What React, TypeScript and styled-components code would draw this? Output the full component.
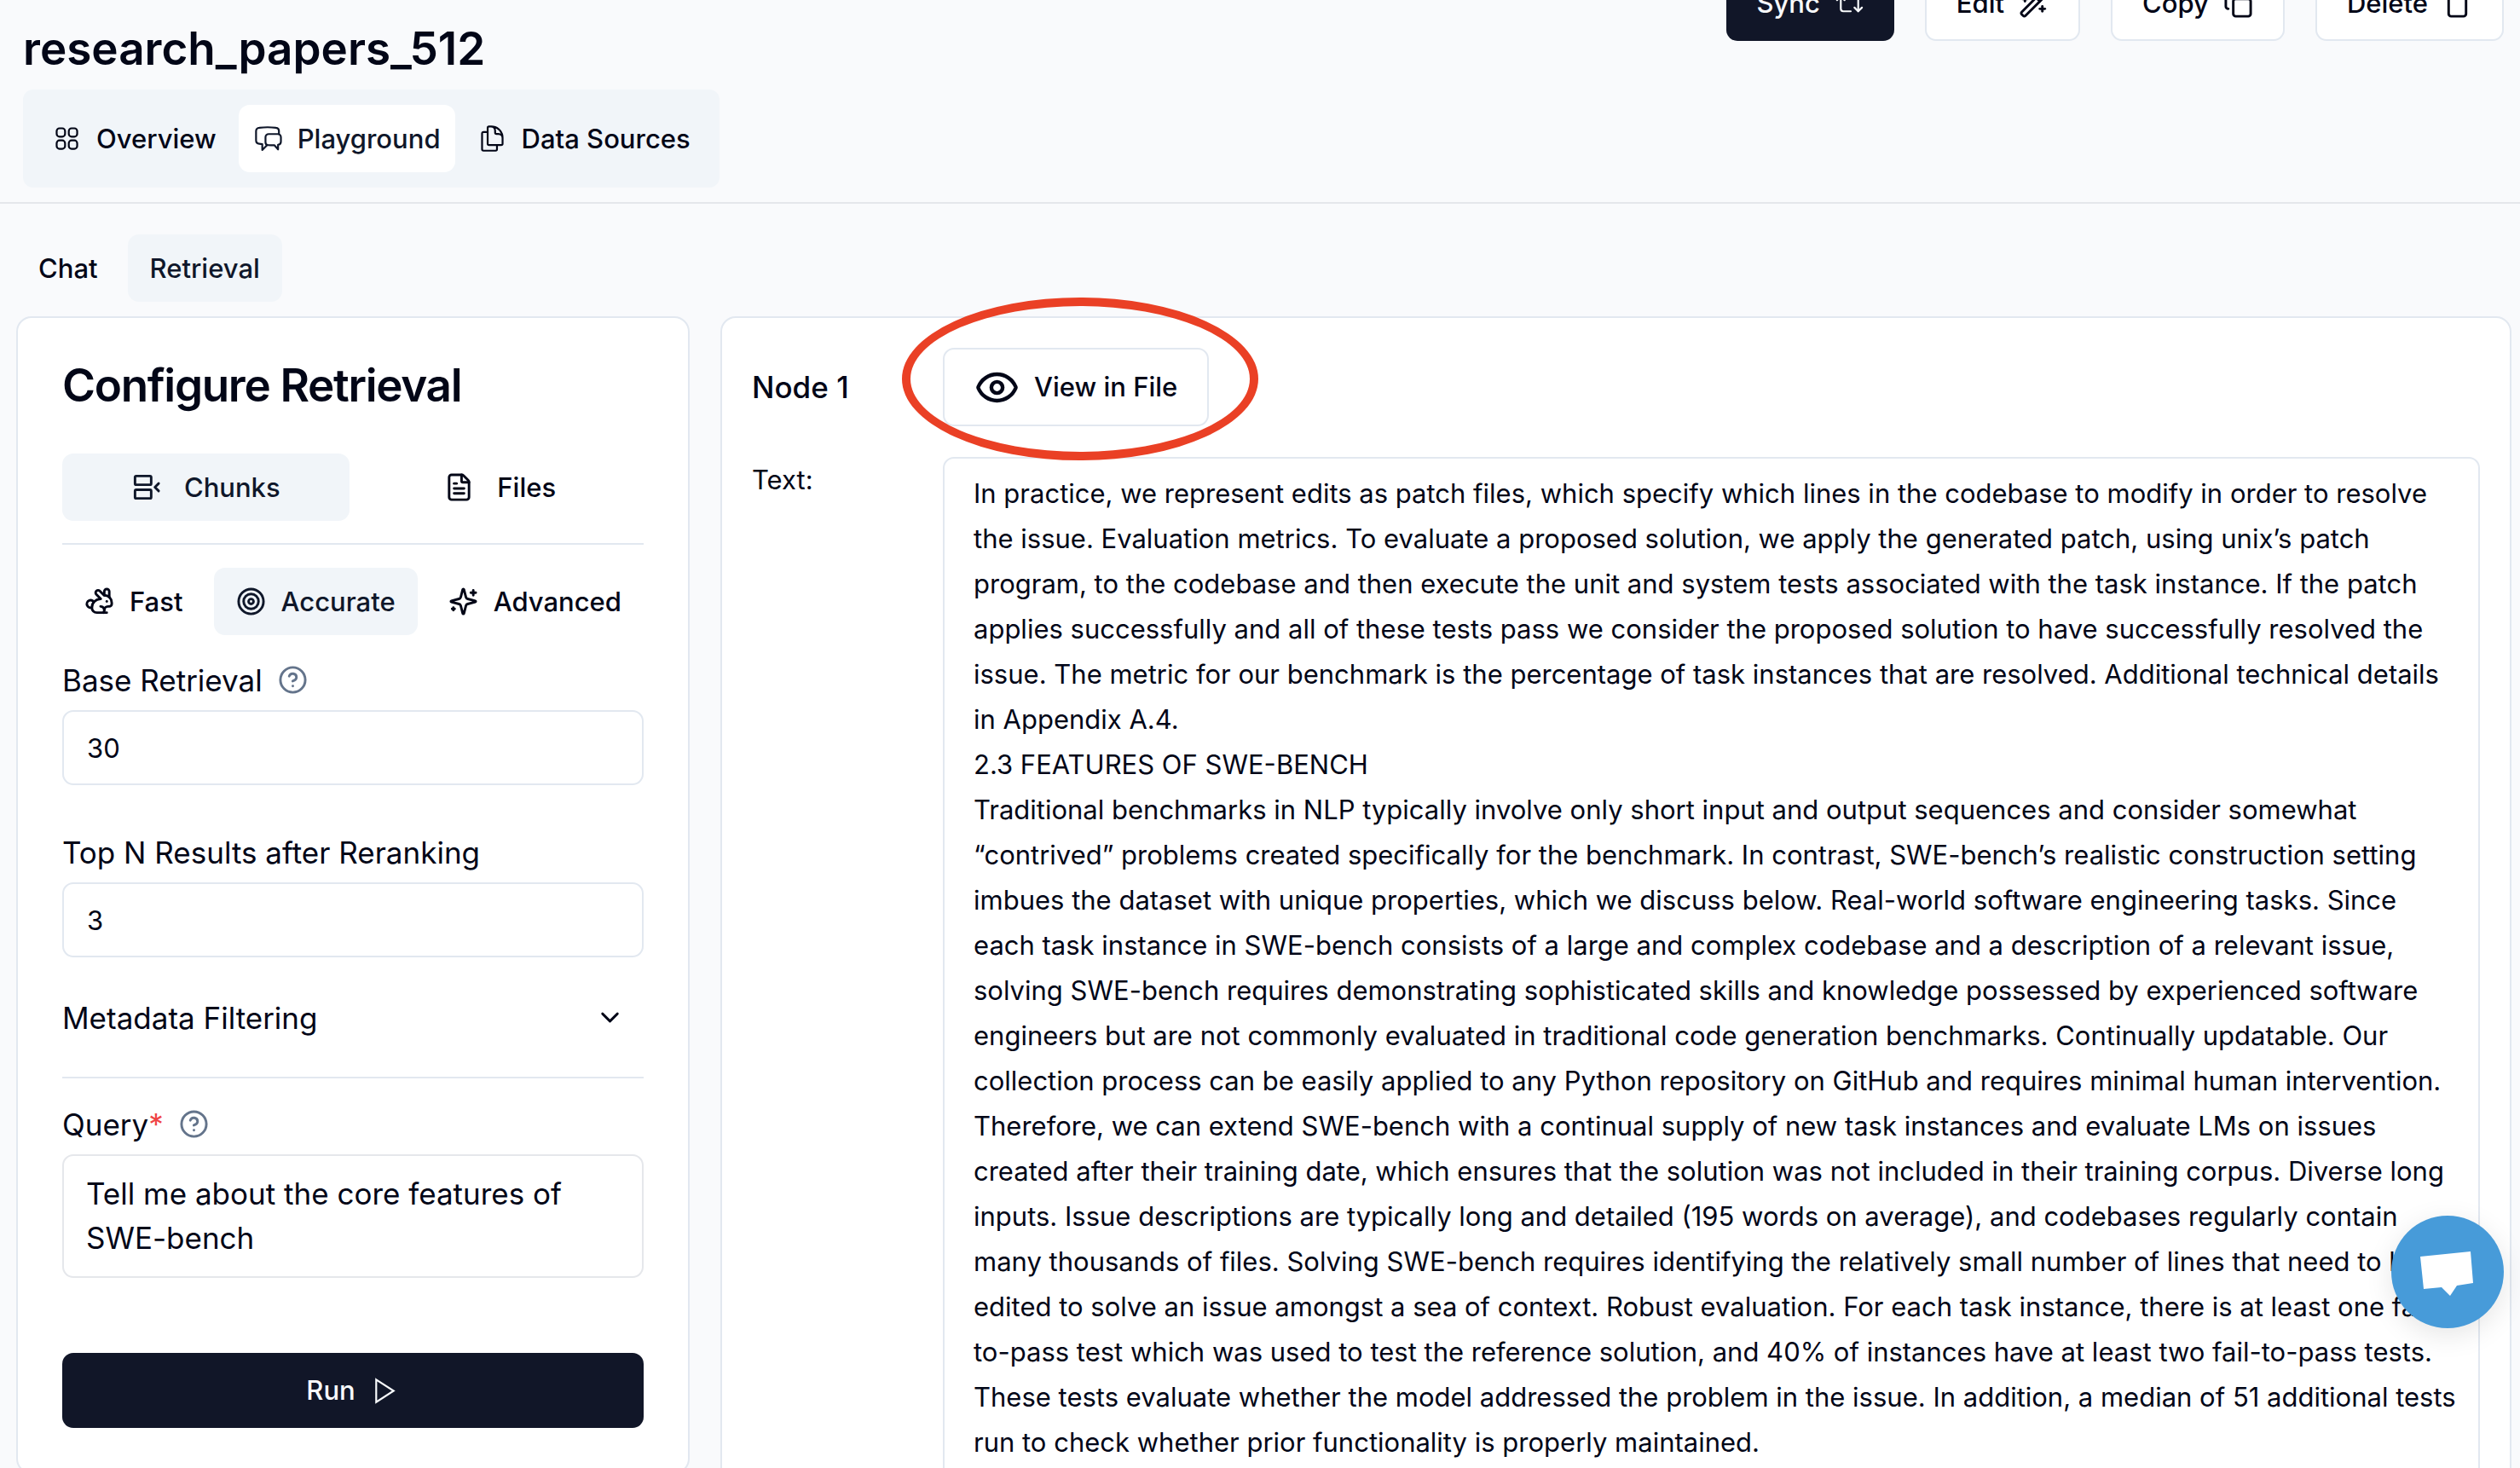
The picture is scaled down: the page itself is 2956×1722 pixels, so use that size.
import React from "react";
import styled, { createGlobalStyle } from "styled-components";
import {
  FileText, Rabbit, Target, CircleHelp, ChevronDown, Eye, Copy, Trash,
  WandSparkles, Repeat2, BetweenHorizontalEnd,
} from "lucide-react";
import { HiOutlineSquares2X2, HiOutlineDocumentDuplicate } from "react-icons/hi2";

const ink = "#020617";
const navy = "#111628";
const line = "#e2e8f0";
const tint = "#f1f5f9";
const page = "#f9fafc";

const GlobalStyle = createGlobalStyle`
  *, *::before, *::after { box-sizing: border-box; }
  body {
    margin: 0;
    background: ${page};
    color: ${ink};
    font-family: Inter, "Liberation Sans", sans-serif;
    font-size: 31px;
    line-height: 44px;
    overflow: hidden;
  }
  button, input, textarea { font: inherit; color: inherit; margin: 0; }
  h1, h2, h3, p { margin: 0; }
  svg { flex: none; }
`;

const Page = styled.div`
  height: 100vh;
  overflow: hidden;
`;

const Header = styled.header`
  display: flex;
  justify-content: space-between;
  align-items: flex-start;
  padding: 0 19px 17px 27px;
  border-bottom: 2px solid #e5e7eb;
`;

const Title = styled.h1`
  margin: 22px 0 13px;
  font-size: 53px;
  line-height: 70px;
  font-weight: 600;
`;

const PrimaryTabs = styled.nav`
  display: flex;
  align-items: center;
  gap: 9px;
  height: 115px;
  padding: 0 17px;
  border-radius: 12px;
  background: ${tint};
`;

const Tab = styled.button<{ $active?: boolean; $grow?: boolean; $gap?: number }>`
  display: flex;
  align-items: center;
  justify-content: center;
  flex: ${(p) => (p.$grow ? "1 1 0" : "none")};
  gap: ${(p) => p.$gap ?? 20}px;
  height: 79px;
  padding: 0 26px;
  border: 0;
  border-radius: 13px;
  background: ${(p) => (p.$active ? tint : "transparent")};
  color: ${(p) => (p.$active ? "#0f172a" : ink)};
  font-weight: 500;
`;

const PrimaryTab = styled(Tab)`
  gap: 17px;
  padding: 0 17px;
  background: ${(p) => (p.$active ? "#fff" : "transparent")};
`;

const Actions = styled.div`
  display: flex;
  gap: 36px;
  margin-top: -40px;
`;

const Button = styled.button<{ $dark?: boolean; $wide?: boolean; $tall?: boolean }>`
  display: flex;
  align-items: center;
  justify-content: center;
  gap: 17px;
  width: ${(p) => (p.$wide ? "100%" : "auto")};
  height: ${(p) => (p.$tall ? 92 : 88)}px;
  padding: 0 35px;
  border: ${(p) => (p.$dark ? "0" : `2px solid ${line}`)};
  border-radius: 13px;
  background: ${(p) => (p.$dark ? navy : "#fff")};
  color: ${(p) => (p.$dark ? "#f8fafc" : ink)};
  font-weight: 500;
`;

const SecondaryTabs = styled.nav`
  display: flex;
  gap: 9px;
  padding: 36px 19px 17px;
`;

const Columns = styled.main`
  display: grid;
  grid-template-columns: 790px minmax(0, 1fr);
  gap: 36px;
  align-items: start;
  padding: 0 10px 0 19px;
`;

const Panel = styled.section`
  border: 2px solid ${line};
  border-radius: 18px;
  background: #fff;
`;

const ConfigPanel = styled(Panel)`
  display: flex;
  flex-direction: column;
  padding: 44px 52px 52px;
`;

const PanelTitle = styled.h2`
  margin-bottom: 45px;
  font-size: 53px;
  line-height: 70px;
  font-weight: 600;
  letter-spacing: -0.025em;
`;

const TabRow = styled.div<{ $split?: boolean }>`
  display: flex;
  justify-content: space-between;
  gap: ${(p) => (p.$split ? 9 : 0)}px;
`;

const Divider = styled.hr`
  width: 100%;
  height: 2px;
  margin: 26px 0 27px;
  border: 0;
  background: ${line};
`;

const Field = styled.div`
  display: flex;
  flex-direction: column;
  gap: 9px;
`;

const Fields = styled.div`
  display: flex;
  flex-direction: column;
  gap: 52px;
  margin-top: 26px;
`;

const LabelRow = styled.div`
  display: flex;
  align-items: center;
  gap: 18px;
  height: 53px;
  font-size: 35px;
`;

const Required = styled.span`
  color: #ef4444;
`;

const HelpButton = styled.button`
  display: flex;
  padding: 0;
  border: 0;
  background: none;
  color: #64748b;
`;

const TextInput = styled.input`
  width: 100%;
  height: 88px;
  padding: 0 27px;
  border: 2px solid ${line};
  border-radius: 13px;
  background: #fff;
`;

const QueryInput = styled.textarea`
  display: block;
  width: 100%;
  height: 145px;
  padding: 18px 26px;
  border: 2px solid #e5e7eb;
  border-radius: 13px;
  background: #fff;
  resize: none;
  overflow: hidden;
  font-size: 35px;
  line-height: 52px;
`;

const Disclosure = styled.button`
  display: flex;
  align-items: center;
  justify-content: space-between;
  height: 53px;
  margin: 44px 0 17px;
  padding: 0 22px 0 0;
  border: 0;
  background: none;
  font-size: 35px;
`;

const RunRow = styled.div`
  margin-top: 88px;
`;

const ResultPanel = styled(Panel)`
  display: grid;
  grid-template-columns: 188px minmax(0, 1fr);
  column-gap: 36px;
  row-gap: 36px;
  padding: 35px;
`;

const NodeTitle = styled.h3`
  align-self: center;
  font-size: 35px;
  font-weight: 500;
`;

const Marked = styled.div`
  position: relative;
  justify-self: start;
`;

const Ring = styled.div`
  position: absolute;
  inset: -59px -58px -40px -48px;
  border: 10px solid #ea4025;
  border-radius: 50%;
  pointer-events: none;
`;

const FieldName = styled.span`
  line-height: 53px;
`;

const Passage = styled.div`
  min-height: 1240px;
  padding: 14px 34px;
  border: 2px solid ${line};
  border-radius: 13px;
  line-height: 53px;
  white-space: pre;
`;

const ChatBubble = styled.button`
  position: fixed;
  right: 19px;
  bottom: 164px;
  width: 132px;
  height: 132px;
  padding: 0;
  border: 0;
  border-radius: 50%;
  background: #479bd9;
  box-shadow: 0 8px 32px rgba(0, 0, 0, 0.1);
`;

const StrokeIcon = styled.svg.attrs({
  width: 35,
  height: 35,
  viewBox: "0 0 24 24",
  fill: "none",
  stroke: "currentColor",
  strokeLinecap: "round",
  strokeLinejoin: "round",
})``;

const passage = `In practice, we represent edits as patch files, which specify which lines in the codebase to modify in order to resolve
the issue. Evaluation metrics. To evaluate a proposed solution, we apply the generated patch, using unix’s patch
program, to the codebase and then execute the unit and system tests associated with the task instance. If the patch
applies successfully and all of these tests pass we consider the proposed solution to have successfully resolved the
issue. The metric for our benchmark is the percentage of task instances that are resolved. Additional technical details
in Appendix A.4.
2.3 FEATURES OF SWE-BENCH
Traditional benchmarks in NLP typically involve only short input and output sequences and consider somewhat
“contrived” problems created specifically for the benchmark. In contrast, SWE-bench’s realistic construction setting
imbues the dataset with unique properties, which we discuss below. Real-world software engineering tasks. Since
each task instance in SWE-bench consists of a large and complex codebase and a description of a relevant issue,
solving SWE-bench requires demonstrating sophisticated skills and knowledge possessed by experienced software
engineers but are not commonly evaluated in traditional code generation benchmarks. Continually updatable. Our
collection process can be easily applied to any Python repository on GitHub and requires minimal human intervention.
Therefore, we can extend SWE-bench with a continual supply of new task instances and evaluate LMs on issues
created after their training date, which ensures that the solution was not included in their training corpus. Diverse long
inputs. Issue descriptions are typically long and detailed (195 words on average), and codebases regularly contain
many thousands of files. Solving SWE-bench requires identifying the relatively small number of lines that need to be
edited to solve an issue amongst a sea of context. Robust evaluation. For each task instance, there is at least one fail-
to-pass test which was used to test the reference solution, and 40% of instances have at least two fail-to-pass tests.
These tests evaluate whether the model addressed the problem in the issue. In addition, a median of 51 additional tests
run to check whether prior functionality is properly maintained.`;

function ChatsIcon() {
  return (
    <StrokeIcon strokeWidth={1.5}>
      <path d="M20.7 8.4V5.9a2.6 2.6 0 0 0-2.4-2.6 60 60 0 0 0-13.4 0A2.7 2.7 0 0 0 2.3 6v7.4a2.8 2.8 0 0 0 2.5 2.8l2.5.3v4.7l4-4.1" />
      <path d="M12.5 8.4h7.2a2.6 2.6 0 0 1 2.6 2.6v3.4a2.6 2.6 0 0 1-2.3 2.6v3.8l-3-3.5c-1.9.1-3.8.1-5.1 0a2.3 2.3 0 0 1-2-2.4V11a2.6 2.6 0 0 1 2.6-2.6Z" />
    </StrokeIcon>
  );
}

function SparkleIcon() {
  return (
    <StrokeIcon strokeWidth={2}>
      <path d="M9.937 15.5A2 2 0 0 0 8.5 14.063l-6.135-1.582a.5.5 0 0 1 0-.962L8.5 9.936A2 2 0 0 0 9.937 8.5l1.582-6.135a.5.5 0 0 1 .963 0L14.063 8.5A2 2 0 0 0 15.5 9.937l6.135 1.581a.5.5 0 0 1 0 .964L15.5 14.063a2 2 0 0 0-1.437 1.437l-1.582 6.135a.5.5 0 0 1-.963 0z" />
      <path d="M20 3v4M22 5h-4M4 17v2M5 18H3" />
    </StrokeIcon>
  );
}

function PlayIcon() {
  return (
    <StrokeIcon strokeWidth={1.5}>
      <path d="M5 3 19 12 5 21Z" strokeLinejoin="miter" />
    </StrokeIcon>
  );
}

function Help({ topic }: { topic: string }) {
  return (
    <HelpButton type="button" aria-label={`About ${topic}`}>
      <CircleHelp size={35} />
    </HelpButton>
  );
}

export default function App() {
  return (
    <>
      <GlobalStyle />
      <Page>
        <Header>
          <div>
            <Title>research_papers_512</Title>
            <PrimaryTabs>
              <PrimaryTab><HiOutlineSquares2X2 size={35} />Overview</PrimaryTab>
              <PrimaryTab $active><ChatsIcon />Playground</PrimaryTab>
              <PrimaryTab><HiOutlineDocumentDuplicate size={35} />Data Sources</PrimaryTab>
            </PrimaryTabs>
          </div>
          <Actions>
            <Button $dark>Sync<Repeat2 size={35} strokeWidth={1.5} /></Button>
            <Button>Edit<WandSparkles size={35} /></Button>
            <Button>Copy<Copy size={35} /></Button>
            <Button>Delete<Trash size={35} /></Button>
          </Actions>
        </Header>
        <SecondaryTabs>
          <Tab>Chat</Tab>
          <Tab $active>Retrieval</Tab>
        </SecondaryTabs>
        <Columns>
          <ConfigPanel>
            <PanelTitle>Configure Retrieval</PanelTitle>
            <TabRow $split>
              <Tab $active $grow $gap={27}><BetweenHorizontalEnd size={35} />Chunks</Tab>
              <Tab $grow $gap={27}><FileText size={35} />Files</Tab>
            </TabRow>
            <Divider />
            <TabRow>
              <Tab $gap={18}><Rabbit size={35} />Fast</Tab>
              <Tab $active $gap={18}><Target size={35} />Accurate</Tab>
              <Tab $gap={18}><SparkleIcon />Advanced</Tab>
            </TabRow>
            <Fields>
              <Field>
                <LabelRow><label htmlFor="base">Base Retrieval</label><Help topic="base retrieval" /></LabelRow>
                <TextInput id="base" defaultValue="30" />
              </Field>
              <Field>
                <LabelRow><label htmlFor="top">Top N Results after Reranking</label></LabelRow>
                <TextInput id="top" defaultValue="3" />
              </Field>
            </Fields>
            <Disclosure>Metadata Filtering<ChevronDown size={35} /></Disclosure>
            <Divider />
            <Field>
              <LabelRow><label htmlFor="query">Query<Required>*</Required></label><Help topic="query" /></LabelRow>
              <QueryInput id="query" defaultValue="Tell me about the core features of SWE-bench" />
            </Field>
            <RunRow><Button $dark $wide>Run<PlayIcon /></Button></RunRow>
          </ConfigPanel>
          <ResultPanel>
            <NodeTitle>Node 1</NodeTitle>
            <Marked>
              <Button $tall><Eye size={53} />View in File</Button>
              <Ring />
            </Marked>
            <FieldName>Text:</FieldName>
            <Passage>{passage}</Passage>
          </ResultPanel>
        </Columns>
        <ChatBubble aria-label="Open chat">
          <svg width="132" height="132" viewBox="0 0 132 132" fill="#fff">
            <path d="M34 48 93 42 96 79 77 82 69 94 59 84 38 86Z" />
          </svg>
        </ChatBubble>
      </Page>
    </>
  );
}
